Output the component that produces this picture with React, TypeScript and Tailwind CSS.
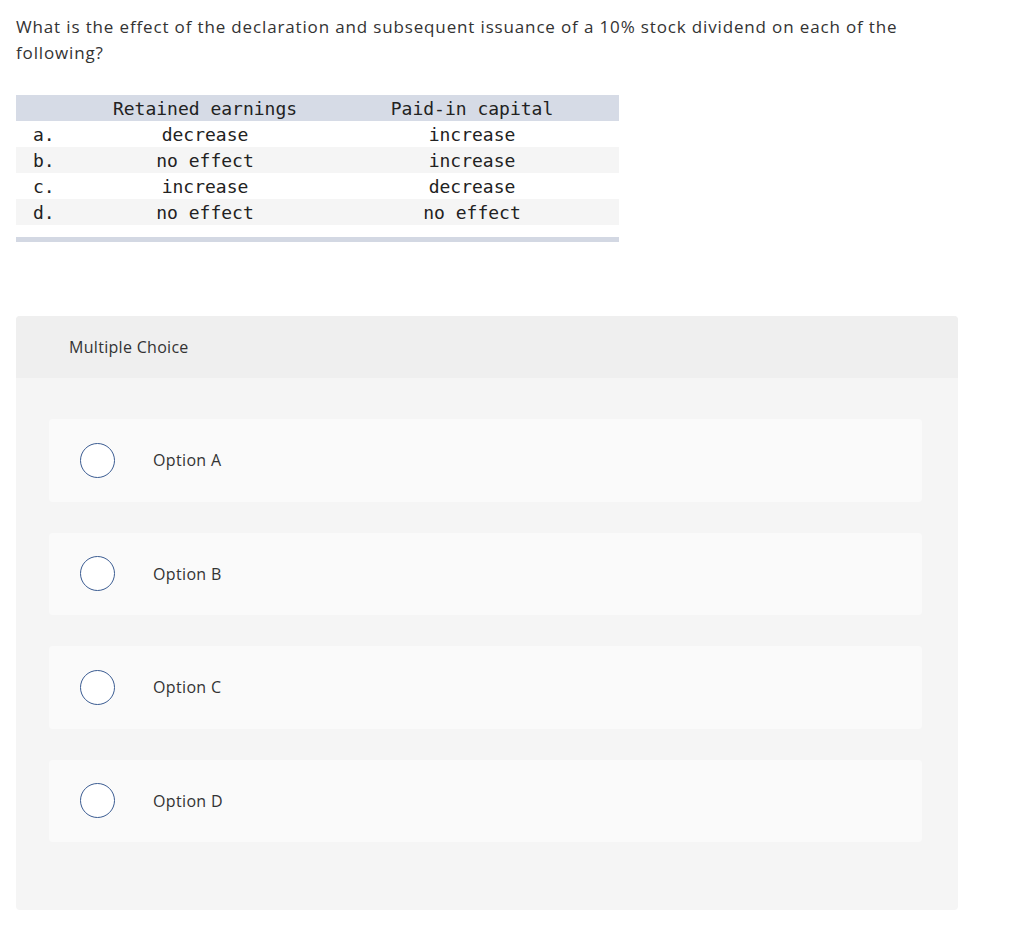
import React from 'react';

const ROWS = [
  { key: 'a.', re: 'decrease', pic: 'increase' },
  { key: 'b.', re: 'no effect', pic: 'increase' },
  { key: 'c.', re: 'increase', pic: 'decrease' },
  { key: 'd.', re: 'no effect', pic: 'no effect' },
];

const OPTIONS = ['Option A', 'Option B', 'Option C', 'Option D'];

const mono = { fontFamily: '"DejaVu Sans Mono", "Liberation Mono", monospace' };

export default function App() {
  return (
    <div className="min-h-[936px] bg-white text-[#333] font-['Open_Sans',sans-serif]">
      <div className="px-4 pt-[14px]">
        <p className="text-[17px] leading-[26px] tracking-[0.85px] text-[#333] w-[910px]">
          What is the effect of the declaration and subsequent issuance of a 10% stock dividend on each of the following?
        </p>

        {/* table */}
        <div className="mt-[29px] w-[603px] text-[18px] text-[#222]" style={mono}>
          <div className="flex h-[26px] items-center bg-[#d6dbe6]">
            <div className="w-[54px]" />
            <div className="w-[270px] text-center">Retained earnings</div>
            <div className="w-[264px] text-center">Paid-in capital</div>
          </div>
          {ROWS.map((r, i) => (
            <div key={r.key} className={'flex h-[26px] items-center ' + (i % 2 === 1 ? 'bg-[#f5f5f5]' : 'bg-white')}>
              <div className="w-[54px] pl-[17px]">{r.key}</div>
              <div className="w-[270px] text-center">{r.re}</div>
              <div className="w-[264px] text-center">{r.pic}</div>
            </div>
          ))}
          <div className="mt-[12px] h-[5px] bg-[#d3d8e3]" />
        </div>
      </div>

      {/* multiple choice panel */}
      <div className="ml-4 mt-[74px] w-[942px] rounded-[4px] overflow-hidden bg-[#f5f5f5] pb-[68px]">
        <div className="h-[62px] bg-[#efefef] flex items-center pl-[53px] text-[16px] tracking-[0.3px] text-[#333]">
          Multiple Choice
        </div>
        <div className="pt-[41px] pl-[33px] pr-[36px] flex flex-col gap-[31px]">
          {OPTIONS.map(o => (
            <div key={o} className="h-[82.5px] bg-[#fafafa] rounded-[4px] flex items-center pl-[31px]">
              <span className="w-[35px] h-[35px] rounded-full border-[1.5px] border-[#3b5c92] bg-white" />
              <span className="ml-[38px] text-[16px] tracking-[0.35px] text-[#333]">{o}</span>
            </div>
          ))}
        </div>
      </div>
    </div>
  );
}
